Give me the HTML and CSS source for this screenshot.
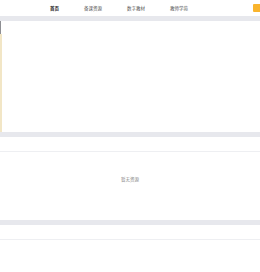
FILE: index.html
```html
<!DOCTYPE html>
<html lang="zh-CN">
<head>
  <meta charset="UTF-8">
  <meta name="viewport" content="width=device-width, initial-scale=1.0">
  <title>首页</title>
  <link rel="stylesheet" href="styles.css">
</head>
<body>
  <!-- Header -->
  <div class="header">
    <nav class="nav">
      <a class="nav-item active" href="#">首页</a>
      <a class="nav-item" href="#">备课资源</a>
      <a class="nav-item" href="#">数字教材</a>
      <a class="nav-item" href="#">教师学苑</a>
    </nav>
    <div class="user-badge"></div>
  </div>

  <div class="divider"></div>

  <!-- Banner -->
  <div class="banner">
    <div class="banner-edge">
      <div class="edge-top"></div>
      <div class="edge-rest"></div>
    </div>
    <div class="banner-body"></div>
  </div>

  <div class="divider"></div>

  <!-- Resources -->
  <div class="section resources">
    <div class="section-head"></div>
    <div class="empty">暂无资源</div>
  </div>

  <div class="divider"></div>

  <div class="section">
    <div class="section-head"></div>
  </div>
</body>
</html>
```

FILE: styles.css
```css
/* General Styling */
body {
  margin: 0;
  padding: 0;
  background-color: #ffffff;
  font-family: "Noto Sans CJK SC", "Noto Sans", sans-serif;
}

/* Header */
.header {
  display: flex;
  align-items: center;
  height: 16px;
}

.nav {
  display: flex;
  align-items: center;
  gap: 25px;
  padding-left: 50px;
}

.nav-item {
  font-size: 4.5px;
  line-height: 16px;
  color: #555;
  text-decoration: none;
}

.nav-item.active {
  color: #222;
  font-weight: bold;
}

.user-badge {
  margin-left: auto;
  width: 7px;
  height: 8px;
  background-color: #f9b42d;
  border-radius: 1px 0 0 1px;
}

.divider {
  height: 5px;
  background-color: #e7e8ed;
}

/* Banner */
.banner {
  display: flex;
  height: 111px;
}

.banner-edge {
  display: flex;
  flex-direction: column;
  width: 2px;
}

.edge-top {
  height: 13px;
  width: 1px;
  background-color: #8e8f93;
}

.edge-rest {
  flex: 1;
  background-color: #f2e6c6;
}

.banner-body {
  flex: 1;
}

/* Sections */
.section.resources {
  height: 83px;
}

.section-head {
  height: 14px;
  border-bottom: 1px solid #eeeff2;
}

.empty {
  text-align: center;
  font-size: 4.5px;
  color: #888;
  padding-top: 24px;
}
```
